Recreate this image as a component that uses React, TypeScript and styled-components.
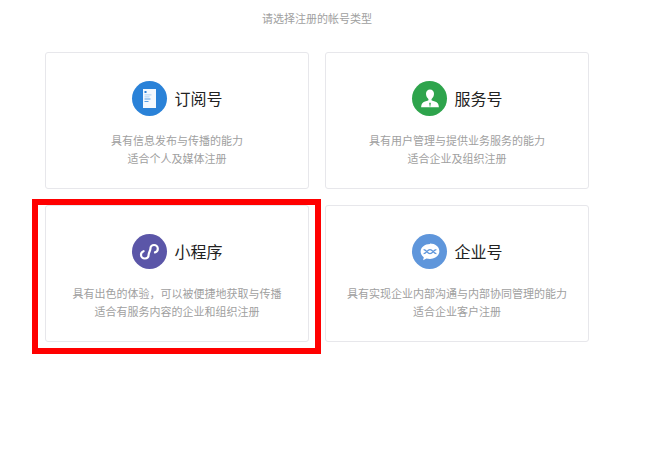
import React from "react";
import styled, { createGlobalStyle } from "styled-components";

const Global = createGlobalStyle`
  html, body { margin: 0; padding: 0; background: #fff; }
  body { font-family: "Noto Sans CJK SC", "Liberation Sans", sans-serif; }
`;

const Page = styled.div`
  width: 657px;
  height: 455px;
  overflow: hidden;
  padding: 0 0 0 45px;
  box-sizing: border-box;
`;

const Heading = styled.h1`
  width: 544px;
  height: 52px;
  margin: 0;
  padding-top: 10px;
  box-sizing: border-box;
  text-align: center;
  font-size: 11px;
  line-height: 16px;
  font-weight: 400;
  color: #a0a0a0;
`;

const Grid = styled.div`
  display: grid;
  grid-template-columns: 264px 264px;
  grid-auto-rows: 137px;
  gap: 16px;
`;

const Card = styled.section`
  position: relative;
  box-sizing: border-box;
  border: 1px solid #e7e7eb;
  border-radius: 3px;
  padding-top: 27px;
  text-align: center;
`;

const CardHead = styled.div`
  display: flex;
  align-items: center;
  justify-content: center;
  gap: 7px;
  height: 36px;
  padding-left: 1px;
`;

const Badge = styled.span<{ $bg: string }>`
  width: 35px;
  height: 35px;
  border-radius: 50%;
  background: ${(p) => p.$bg};
  display: flex;
  align-items: center;
  justify-content: center;
  flex: none;
  margin-top: 1px;
`;

const CardTitle = styled.h2`
  margin: 0;
  font-size: 16px;
  line-height: 24px;
  font-weight: 400;
  color: #222;
`;

const Desc = styled.p`
  margin: 15px 0 0;
  font-size: 11px;
  line-height: 18px;
  color: #a0a0a0;
`;

const Highlight = styled.div`
  position: absolute;
  left: -14px;
  top: -7px;
  width: 289px;
  height: 155px;
  box-sizing: border-box;
  border: 6px solid #ff0000;
  pointer-events: none;
`;

const DocIcon = () => (
  <svg width="13" height="19" viewBox="0 0 13 19">
    <rect x="0" y="0" width="13" height="19" fill="#f4f9fe" />
    <rect x="1.5" y="2" width="2" height="2" fill="#2a82d8" />
    <rect x="1.5" y="5.500" width="7" height="0.800" fill="#9cc6ef" />
    <rect x="1.500" y="7.500" width="5" height="0.800" fill="#9cc6ef" />
    <rect x="1.500" y="9.500" width="6" height="1" fill="#5aa0e4" />
    <rect x="1.500" y="12" width="4" height="1" fill="#5aa0e4" />
  </svg>
);

const PersonIcon = () => (
  <svg width="20" height="19" viewBox="0 0 20 19">
    <path
      d="M10 0.500C7.700 0.500 6 2.200 6 4.800c0 2.100 1 4 2.200 5 .4.400.4 1.400-.1 1.800-1.500.8-4.800 1.200-6 2.900-.5.800-.9 2.200-1 3.800h17.800c-.1-1.600-.5-3-1-3.800-1.200-1.700-4.500-2.100-6-2.900-.5-.4-.5-1.400-.1-1.800 1.200-1 2.200-2.900 2.200-5C14 2.200 12.300.5 10 .5z"
      fill="#fff"
    />
    <path d="M10 13.200l-.8 1.200.8 4 .8-4z" fill="#2ea44c" />
  </svg>
);

const LinkIcon = () => (
  <svg width="23" height="23" viewBox="0 0 23 23" fill="none">
    <path
      d="M5.600 11.200C3.800 11.700 3 13.200 3 14.800C3 17 4.800 18.500 6.800 18.500C9 18.500 10.600 17 10.600 14.800C10.600 13 12.400 10.600 12.400 8.800C12.400 6.600 14 5 16 5C18 5 19.800 6.600 19.800 8.800C19.800 10.600 18.600 12 17 12.400"
      stroke="#fff"
      strokeWidth="2.200"
      strokeLinecap="round"
    />
  </svg>
);

const ChatIcon = () => (
  <svg width="22" height="20" viewBox="0 0 27 25">
    <path
      d="M13.500 2.500C7 2.500 1.800 6.700 1.800 12c0 2.800 1.500 5.300 3.900 7l-.8 3.800 4.200-2.300c1.400.4 2.900.6 4.400.6 6.500 0 11.700-4.300 11.700-9.600s-5.200-9.500-11.700-9.500z"
      fill="#fff"
    />
    <path
      d="M5.500 9.500c1.600 0 2.700 1 4 2.500 1.300 1.500 2.500 2.500 4 2.500s2.700-1 4-2.500 2.400-2.500 4-2.500M5.500 14.500c1.600 0 2.700-1 4-2.500s2.500-2.500 4-2.500 2.700 1 4 2.500 2.400 2.500 4 2.500"
      fill="none"
      stroke="#5f96db"
      strokeWidth="1.800"
    />
  </svg>
);

const accounts = [
  {
    title: "订阅号",
    bg: "#2a82d8",
    icon: <DocIcon />,
    lines: ["具有信息发布与传播的能力", "适合个人及媒体注册"],
  },
  {
    title: "服务号",
    bg: "#2ea44c",
    icon: <PersonIcon />,
    lines: ["具有用户管理与提供业务服务的能力", "适合企业及组织注册"],
  },
  {
    title: "小程序",
    bg: "#5b56a8",
    icon: <LinkIcon />,
    lines: ["具有出色的体验，可以被便捷地获取与传播", "适合有服务内容的企业和组织注册"],
    marked: true,
  },
  {
    title: "企业号",
    bg: "#5f96db",
    icon: <ChatIcon />,
    lines: ["具有实现企业内部沟通与内部协同管理的能力", "适合企业客户注册"],
  },
];

export default function App() {
  return (
    <Page>
      <Global />
      <Heading>请选择注册的帐号类型</Heading>
      <Grid>
        {accounts.map((a) => (
          <Card key={a.title}>
            <CardHead>
              <Badge $bg={a.bg}>{a.icon}</Badge>
              <CardTitle>{a.title}</CardTitle>
            </CardHead>
            <Desc>
              {a.lines[0]}
              <br />
              {a.lines[1]}
            </Desc>
            {a.marked && <Highlight />}
          </Card>
        ))}
      </Grid>
    </Page>
  );
}
